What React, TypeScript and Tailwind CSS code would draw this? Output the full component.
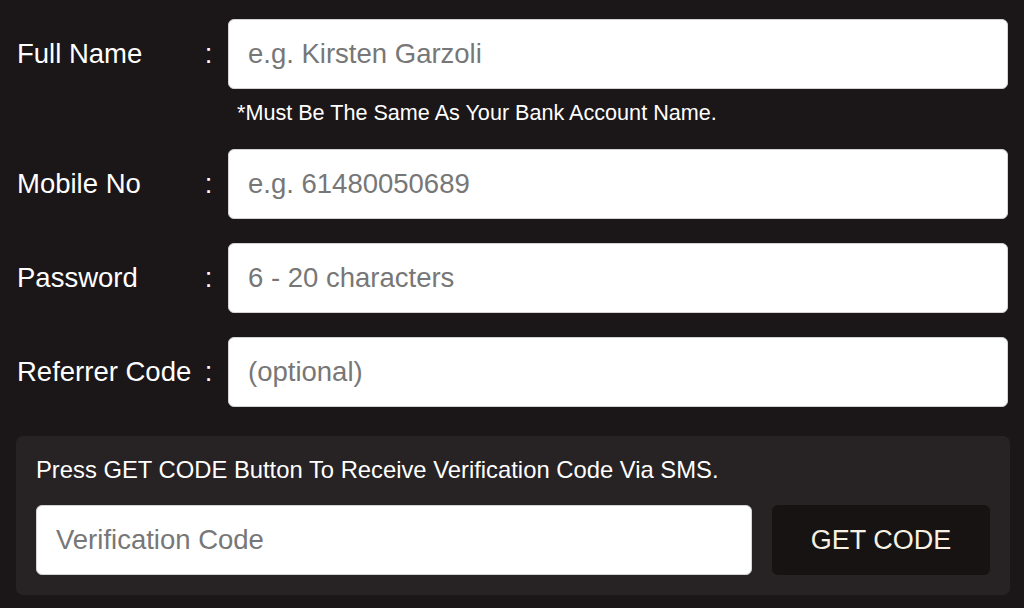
const font = { fontFamily: '"Liberation Sans", Arial, Helvetica, sans-serif' }

interface FieldRowProps {
  label: string
  placeholder: string
  type?: string
  note?: string
}

function FieldRow({ label, placeholder, type = 'text', note }: FieldRowProps) {
  return (
    <div className="flex flex-col">
      <div className="flex items-center">
        <span className="w-[186px] pl-[1px] text-[27.5px] leading-[32px] text-white">{label}</span>
        <span className="w-[13px] text-center text-[27.5px] leading-[32px] text-white">:</span>
        <input
          type={type}
          placeholder={placeholder}
          className="ml-[13px] mr-[2px] h-[70px] flex-1 rounded-[6px] border border-[#d4d4d4] bg-white px-[19px] text-[27.5px] text-[#222] placeholder:text-[#777] outline-none"
          style={font}
        />
      </div>
      {note && (
        <p className="mt-[12px] pl-[221px] text-[21.6px] leading-[24px] text-white">{note}</p>
      )}
    </div>
  )
}

export default function App() {
  return (
    <div className="min-h-[608px] w-[1024px] bg-[#1b1617] pl-[16px] pr-[14px] pt-[19px]" style={font}>
      <div className="flex flex-col gap-[24px]">
        <FieldRow
          label="Full Name"
          placeholder="e.g. Kirsten Garzoli"
          note="*Must Be The Same As Your Bank Account Name."
        />
        <FieldRow label="Mobile No" placeholder="e.g. 61480050689" type="tel" />
        <FieldRow label="Password" placeholder="6 - 20 characters" type="password" />
        <FieldRow label="Referrer Code" placeholder="(optional)" />
      </div>

      <div className="mt-[29px] rounded-[7px] bg-[#272223] px-[20px] pb-[20px] pt-[20px]">
        <p className="text-[23.8px] leading-[28px] text-white">
          Press GET CODE Button To Receive Verification Code Via SMS.
        </p>
        <div className="mt-[21px] flex gap-[20px]">
          <input
            type="text"
            placeholder="Verification Code"
            className="h-[70px] flex-1 rounded-[6px] border border-[#d4d4d4] bg-white px-[19px] text-[27.5px] text-[#222] placeholder:text-[#777] outline-none"
            style={font}
          />
          <button
            className="h-[70px] w-[218px] rounded-[6px] bg-[#171313] text-[27px] text-[#f6f1e2]"
            style={font}
          >
            GET CODE
          </button>
        </div>
      </div>
    </div>
  )
}
